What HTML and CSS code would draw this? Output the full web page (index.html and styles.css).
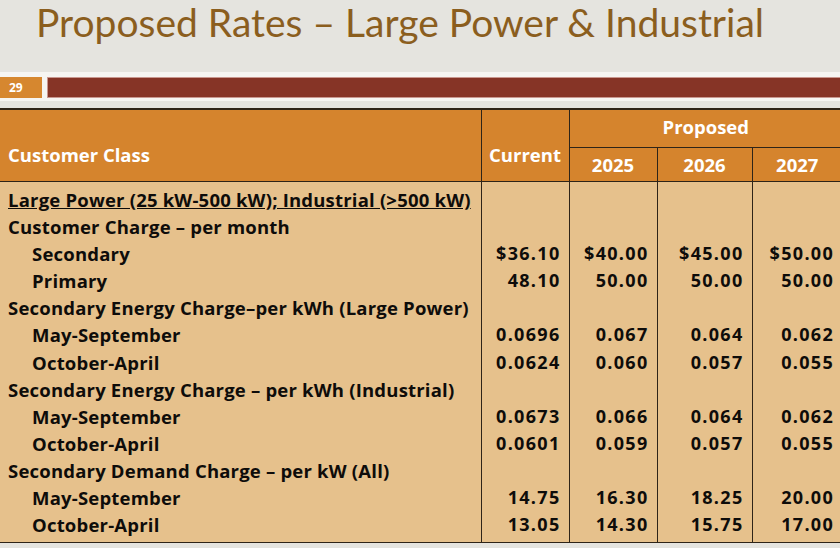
FILE: index.html
```html
<!DOCTYPE html>
<html lang="en">
<head>
<meta charset="utf-8">
<title>Proposed Rates – Large Power &amp; Industrial</title>
<link rel="stylesheet" href="styles.css">
</head>
<body>
<div class="slide">
  <h1 class="title">Proposed Rates – Large Power &amp; Industrial</h1>
  <div class="band">
    <div class="num">29</div>
    <div class="bar"></div>
  </div>
  <table class="rates">
    <colgroup>
      <col class="c-class">
      <col class="c-cur">
      <col class="c-y1">
      <col class="c-y2">
      <col class="c-y3">
    </colgroup>
    <thead>
      <tr class="hr1">
        <th rowspan="2" class="cls">Customer Class</th>
        <th rowspan="2" class="cur">Current</th>
        <th colspan="3" class="prop">Proposed</th>
      </tr>
      <tr class="hr2">
        <th>2025</th>
        <th>2026</th>
        <th>2027</th>
      </tr>
    </thead>
    <tbody>
      <tr class="first"><td><u>Large Power (25 kW-500 kW); Industrial (&gt;500 kW)</u></td><td></td><td></td><td></td><td></td></tr>
      <tr><td>Customer Charge – per month</td><td></td><td></td><td></td><td></td></tr>
      <tr><td class="ind">Secondary</td><td>$36.10</td><td>$40.00</td><td>$45.00</td><td>$50.00</td></tr>
      <tr><td class="ind">Primary</td><td>48.10</td><td>50.00</td><td>50.00</td><td>50.00</td></tr>
      <tr><td>Secondary Energy Charge–per kWh (Large Power)</td><td></td><td></td><td></td><td></td></tr>
      <tr><td class="ind">May-September</td><td>0.0696</td><td>0.067</td><td>0.064</td><td>0.062</td></tr>
      <tr><td class="ind">October-April</td><td>0.0624</td><td>0.060</td><td>0.057</td><td>0.055</td></tr>
      <tr><td>Secondary Energy Charge – per kWh (Industrial)</td><td></td><td></td><td></td><td></td></tr>
      <tr><td class="ind">May-September</td><td>0.0673</td><td>0.066</td><td>0.064</td><td>0.062</td></tr>
      <tr><td class="ind">October-April</td><td>0.0601</td><td>0.059</td><td>0.057</td><td>0.055</td></tr>
      <tr><td>Secondary Demand Charge – per kW (All)</td><td></td><td></td><td></td><td></td></tr>
      <tr><td class="ind">May-September</td><td>14.75</td><td>16.30</td><td>18.25</td><td>20.00</td></tr>
      <tr class="last"><td class="ind">October-April</td><td>13.05</td><td>14.30</td><td>15.75</td><td>17.00</td></tr>
    </tbody>
  </table>
</div>
</body>
</html>
```
FILE: styles.css
```css
html, body {
  margin: 0;
  padding: 0;
}
body {
  background: #e5e4df;
  font-family: "Open Sans", Lato, sans-serif;
}
.slide {
  width: 840px;
  height: 548px;
  overflow: hidden;
  background: #e5e4df;
}
.title {
  margin: 0;
  height: 72px;
  padding-left: 36px;
  font-family: Lato, "Open Sans", sans-serif;
  font-size: 39px;
  line-height: 44px;
  font-weight: 400;
  color: #8b5e1e;
  white-space: nowrap;
}
.band {
  display: flex;
  gap: 5px;
  padding: 5px 0 3px;
  background: #f6f5f2;
}
.num {
  width: 42px;
  height: 21px;
  box-sizing: border-box;
  padding-left: 9px;
  background: #d6872f;
  color: #fff;
  font-size: 12px;
  font-weight: 700;
  line-height: 21px;
}
.bar {
  flex: 1;
  height: 21px;
  box-sizing: border-box;
  background: #863426;
  border: 1px solid #c99890;
  border-right: 0;
}
.rates {
  margin-top: 7px;
  width: 842px;
  table-layout: fixed;
  border-collapse: collapse;
  border-top: 2px solid #2e2418;
  border-bottom: 1px solid #2e2418;
}
.c-class { width: 481px; }
.c-cur { width: 88px; }
.c-y1 { width: 88px; }
.c-y2 { width: 95px; }
.c-y3 { width: 90px; }
.rates th {
  background: #d5842d;
  color: #fff;
  font-size: 18.5px;
  font-weight: 700;
  line-height: 24px;
  padding: 0;
  text-align: center;
  border-left: 1px solid #2e2418;
}
.rates th.cls {
  text-align: left;
  padding-left: 8px;
  border-left: 0;
}
.hr1 th.cls, .hr1 th.cur { padding-top: 18px; }
.hr1 th.prop { height: 34px; padding-bottom: 3px; }
.hr2 th {
  height: 33px;
  border-top: 1px solid #2e2418;
  padding-bottom: 0;
}
.rates thead {
  border-bottom: 1px solid #2e2418;
}
.rates td {
  background: #e6c18c;
  color: #0e0c0a;
  font-size: 18px;
  font-weight: 700;
  letter-spacing: 1.3px;
  line-height: 27.1px;
  padding: 0 8px 0 0;
  text-align: right;
  border-left: 1px solid #2e2418;
  white-space: nowrap;
}
.rates td:first-child {
  text-align: left;
  font-size: 18.5px;
  letter-spacing: 0.2px;
  padding: 0 0 0 8px;
  border-left: 0;
}
.rates td.ind {
  padding-left: 32px;
}
.rates tr.first td { padding-top: 4px; }
.rates tr.last td { padding-bottom: 4px; }
```
